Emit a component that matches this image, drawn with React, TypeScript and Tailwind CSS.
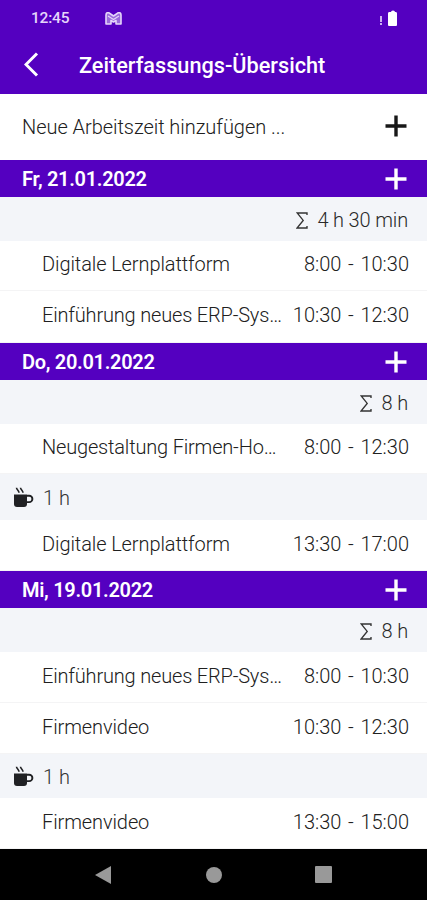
import React from "react";

function Plus({ light = false }: { light?: boolean }) {
  return (
    <svg className="h-[22px] w-[22px] shrink-0" viewBox="0 0 22 22" fill="none" stroke={light ? "#fff" : "#181818"} strokeWidth="3.4" aria-hidden="true">
      <path d="M11 .5v21M.5 11h21" />
    </svg>
  );
}

function DayHeader({ date }: { date: string }) {
  return (
    <div className="flex h-[37px] shrink-0 items-center justify-between bg-[#5400c0] pl-[22px] pr-5 text-white">
      <h2 className="text-[20px] font-semibold leading-6 tracking-[-0.3px]">{date}</h2>
      <Plus light />
    </div>
  );
}

function Sum({ value }: { value: string }) {
  return (
    <div className="flex h-11 shrink-0 items-center justify-end gap-[9px] bg-[#f3f5f9] pr-[19px] pt-[2px] text-[20px] text-[#292929]">
      <svg className="mt-px h-[17px] w-3" viewBox="0 0 12 17" fill="none" stroke="#333" strokeWidth="1.35" aria-hidden="true">
        <path d="M11 3V1H1.2l6 7.4L1 16h10v-2" />
      </svg>
      <span className="tracking-[-0.15px]">{value}</span>
    </div>
  );
}

function Entry({ title, start, end, height }: { title: string; start: string; end: string; height: string }) {
  const tracking = title.endsWith("…") ? "tracking-[-0.18px]" : "tracking-[-0.1px]";
  return (
    <div className={`flex shrink-0 items-center justify-between border-b border-[#f4f4f5] bg-white pb-[3px] pl-[42px] pr-[18px] text-[20px] text-[#202020] ${height}`}>
      <span className={`whitespace-nowrap ${tracking}`}>{title}</span>
      <span className="flex whitespace-nowrap">
        <span>{start}</span>
        <span className="w-[19px] text-center">-</span>
        <span>{end}</span>
      </span>
    </div>
  );
}

function Pause({ height }: { height: string }) {
  return (
    <div className={`flex shrink-0 items-center gap-[9px] bg-[#f3f5f9] pl-[13px] pt-px text-[20px] text-[#333] ${height}`}>
      <svg className="h-[21px] w-[21px]" viewBox="0 0 21 21" aria-hidden="true">
        <path d="M1 7.5h13V17q0 3-3 3H4q-3 0-3-3Z" fill="#202124" />
        <path d="M14 8.7h2.2a3.2 3.2 0 0 1 0 6.4H14" fill="none" stroke="#202124" strokeWidth="1.9" />
        <path d="M3.500 .8c0 2 2.500 2.600 2.500 4.900M7.500 .8c0 2 2.500 2.600 2.500 4.900" fill="none" stroke="#202124" strokeWidth="1.6" />
      </svg>
      <span>1 h</span>
    </div>
  );
}

export default function App() {
  return (
    <div className="flex h-[900px] w-[427px] flex-col overflow-hidden bg-white font-[Roboto,sans-serif] font-light">
      <header className="h-[94px] shrink-0 bg-[#5400c0] text-white">
        <div className="flex h-9 items-center pl-[31px] pr-[29px]">
          <time className="w-[39px] pt-px text-[15.5px] font-medium tracking-[-0.2px] text-[#e5d5fa]">12:45</time>
          <svg className="ml-[35px] h-[13px] w-[17px]" viewBox="0 0 17 13" aria-hidden="true">
            <path d="M1 3Q1 .5 3.500 .5L8.500 4 13.500 .5Q16 .5 16 3v9h-5V8.500l-2.500 1.500L6 8.500V12H1Z" fill="#9a68dc" stroke="#e5d5fa" strokeWidth="1.6" strokeLinejoin="round" />
            <path d="m3 4 5.500 3.500L14 4" fill="none" stroke="#e5d5fa" strokeWidth="1.2" />
          </svg>
          <svg className="ml-auto h-[17px] w-5" viewBox="0 0 20 17" aria-hidden="true">
            <path d="M2 6h2v6H2zM2 13h2v2H2z" fill="#cbb0ef" />
            <path d="M11 2h2q0-1.500 2-1.500T17 2h1q1 0 1 1.500V15q0 1-1 1h-7q-1 0-1-1V3.500Q10 2 11 2Z" fill="#fff" />
          </svg>
        </div>
        <div className="flex h-[57px] items-center pl-6">
          <svg className="h-[25px] w-[15px]" viewBox="0 0 15 25" fill="none" stroke="#fff" strokeWidth="3" aria-hidden="true">
            <path d="M13 1.500 2 12.500l11 11" />
          </svg>
          <h1 className="ml-10 pt-[3px] text-[21.7px] font-medium">Zeiterfassungs-Übersicht</h1>
        </div>
      </header>
      <main className="flex flex-col">
        <div className="flex h-[66px] shrink-0 items-center justify-between pb-[2px] pl-[22px] pr-5 text-[20px] text-[#202020]">
          <span className="pt-[2px] tracking-[-0.05px]">Neue Arbeitszeit hinzufügen ...</span>
          <Plus />
        </div>
        <DayHeader date="Fr, 21.01.2022" />
        <Sum value="4 h 30 min" />
        <Entry title="Digitale Lernplattform" start="8:00" end="10:30" height="h-[50px]" />
        <Entry title="Einführung neues ERP-Sys…" start="10:30" end="12:30" height="h-[52px]" />
        <DayHeader date="Do, 20.01.2022" />
        <Sum value="8 h" />
        <Entry title="Neugestaltung Firmen-Ho…" start="8:00" end="12:30" height="h-[50px]" />
        <Pause height="h-[46px]" />
        <Entry title="Digitale Lernplattform" start="13:30" end="17:00" height="h-[51px]" />
        <DayHeader date="Mi, 19.01.2022" />
        <Sum value="8 h" />
        <Entry title="Einführung neues ERP-Sys…" start="8:00" end="10:30" height="h-[51px]" />
        <Entry title="Firmenvideo" start="10:30" end="12:30" height="h-[51px]" />
        <Pause height="h-[44px]" />
        <Entry title="Firmenvideo" start="13:30" end="15:00" height="h-[51px]" />
      </main>
      <nav className="flex h-[51px] shrink-0 items-center justify-between bg-black px-[95px]">
        <svg className="h-[18px] w-4" viewBox="0 0 16 18" fill="#999" aria-hidden="true"><path d="M16 0v18L0 9Z" /></svg>
        <span className="ml-[2px] h-4 w-4 rounded-full bg-[#999]" />
        <span className="h-[17px] w-[17px] rounded-[1px] bg-[#999]" />
      </nav>
    </div>
  );
}
